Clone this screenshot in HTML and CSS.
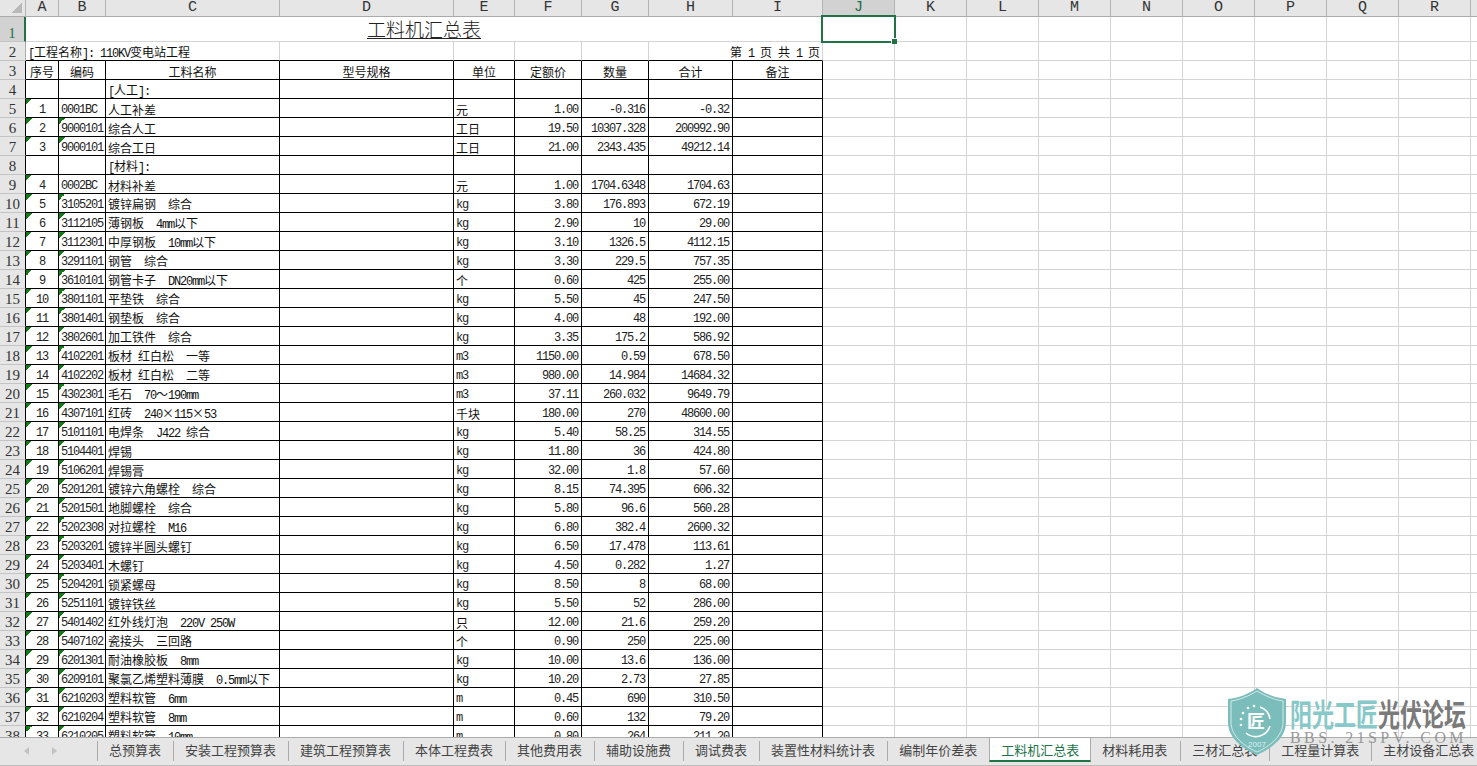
FILE: index.html
```html
<!DOCTYPE html>
<html lang="zh-CN">
<head>
<meta charset="utf-8">
<title>工料机汇总表</title>
<link rel="stylesheet" href="styles.css">
</head>
<body>
<div class="book">
<div class="sheet">
<table class="grid">
<colgroup><col class="c0"><col class="ca"><col class="cb"><col class="cc"><col class="cc"><col class="ce"><col class="cf"><col class="cf"><col class="ch"><col class="ci"><col class="cj"><col class="cj"><col class="cj"><col class="cj"><col class="cj"><col class="cj"><col class="cj"><col class="cj"><col class="cj"><col class="cj"></colgroup>
<tr class="hd"><th class="corner"></th><th>A</th><th>B</th><th>C</th><th>D</th><th>E</th><th>F</th><th>G</th><th>H</th><th>I</th><th class="sel">J</th><th>K</th><th>L</th><th>M</th><th>N</th><th>O</th><th>P</th><th>Q</th><th>R</th><th></th></tr>
<tr class="r1"><th class="rh rsel">1</th><td colspan="9" class="title"><span>工料机汇总表</span></td><td class="cur"><div class="cursor"><i class="handle"></i></div></td><td class="e" colspan="9"></td></tr>
<tr class="r2"><th class="rh">2</th><td colspan="3"><span class="l">[</span>工程名称<span class="l">]: 110KV</span>变电站工程</td><td></td><td></td><td></td><td></td><td colspan="2" class="pg">第<span class="l"> 1 </span>页<span class="l"> </span>共<span class="l"> 1 </span>页</td><td class="e" colspan="10"></td></tr>
<tr class="b"><th class="rh">3</th><td class="c">序号</td><td class="c">编码</td><td class="c">工料名称</td><td class="c">型号规格</td><td class="c">单位</td><td class="c">定额价</td><td class="c">数量</td><td class="c">合计</td><td class="c">备注</td><td class="e" colspan="10"></td></tr>
<tr class="b"><th class="rh">4</th><td></td><td></td><td><span class="l">[</span>人工<span class="l">]:</span></td><td></td><td></td><td></td><td></td><td></td><td></td><td class="e" colspan="10"></td></tr>
<tr class="b"><th class="rh">5</th><td class="s t">1</td><td class="m">0001BC</td><td>人工补差</td><td></td><td>元</td><td class="n">1.00</td><td class="n">-0.316</td><td class="n">-0.32</td><td></td><td class="e" colspan="10"></td></tr>
<tr class="b"><th class="rh">6</th><td class="s t">2</td><td class="m t">9000101</td><td>综合人工</td><td></td><td>工日</td><td class="n">19.50</td><td class="n">10307.328</td><td class="n">200992.90</td><td></td><td class="e" colspan="10"></td></tr>
<tr class="b"><th class="rh">7</th><td class="s t">3</td><td class="m t">9000101</td><td>综合工日</td><td></td><td>工日</td><td class="n">21.00</td><td class="n">2343.435</td><td class="n">49212.14</td><td></td><td class="e" colspan="10"></td></tr>
<tr class="b"><th class="rh">8</th><td></td><td></td><td><span class="l">[</span>材料<span class="l">]:</span></td><td></td><td></td><td></td><td></td><td></td><td></td><td class="e" colspan="10"></td></tr>
<tr class="b"><th class="rh">9</th><td class="s t">4</td><td class="m">0002BC</td><td>材料补差</td><td></td><td>元</td><td class="n">1.00</td><td class="n">1704.6348</td><td class="n">1704.63</td><td></td><td class="e" colspan="10"></td></tr>
<tr class="b"><th class="rh">10</th><td class="s t">5</td><td class="m t">3105201</td><td>镀锌扁钢<span class="l">  </span>综合</td><td></td><td class="m">kg</td><td class="n">3.80</td><td class="n">176.893</td><td class="n">672.19</td><td></td><td class="e" colspan="10"></td></tr>
<tr class="b"><th class="rh">11</th><td class="s t">6</td><td class="m t">3112105</td><td>薄钢板<span class="l">  4mm</span>以下</td><td></td><td class="m">kg</td><td class="n">2.90</td><td class="n">10</td><td class="n">29.00</td><td></td><td class="e" colspan="10"></td></tr>
<tr class="b"><th class="rh">12</th><td class="s t">7</td><td class="m t">3112301</td><td>中厚钢板<span class="l">  10mm</span>以下</td><td></td><td class="m">kg</td><td class="n">3.10</td><td class="n">1326.5</td><td class="n">4112.15</td><td></td><td class="e" colspan="10"></td></tr>
<tr class="b"><th class="rh">13</th><td class="s t">8</td><td class="m t">3291101</td><td>钢管<span class="l">  </span>综合</td><td></td><td class="m">kg</td><td class="n">3.30</td><td class="n">229.5</td><td class="n">757.35</td><td></td><td class="e" colspan="10"></td></tr>
<tr class="b"><th class="rh">14</th><td class="s t">9</td><td class="m t">3610101</td><td>钢管卡子<span class="l">  DN20mm</span>以下</td><td></td><td>个</td><td class="n">0.60</td><td class="n">425</td><td class="n">255.00</td><td></td><td class="e" colspan="10"></td></tr>
<tr class="b"><th class="rh">15</th><td class="s t">10</td><td class="m t">3801101</td><td>平垫铁<span class="l">  </span>综合</td><td></td><td class="m">kg</td><td class="n">5.50</td><td class="n">45</td><td class="n">247.50</td><td></td><td class="e" colspan="10"></td></tr>
<tr class="b"><th class="rh">16</th><td class="s t">11</td><td class="m t">3801401</td><td>钢垫板<span class="l">  </span>综合</td><td></td><td class="m">kg</td><td class="n">4.00</td><td class="n">48</td><td class="n">192.00</td><td></td><td class="e" colspan="10"></td></tr>
<tr class="b"><th class="rh">17</th><td class="s t">12</td><td class="m t">3802601</td><td>加工铁件<span class="l">  </span>综合</td><td></td><td class="m">kg</td><td class="n">3.35</td><td class="n">175.2</td><td class="n">586.92</td><td></td><td class="e" colspan="10"></td></tr>
<tr class="b"><th class="rh">18</th><td class="s t">13</td><td class="m t">4102201</td><td>板材<span class="l"> </span>红白松<span class="l">  </span>一等</td><td></td><td class="m">m3</td><td class="n">1150.00</td><td class="n">0.59</td><td class="n">678.50</td><td></td><td class="e" colspan="10"></td></tr>
<tr class="b"><th class="rh">19</th><td class="s t">14</td><td class="m t">4102202</td><td>板材<span class="l"> </span>红白松<span class="l">  </span>二等</td><td></td><td class="m">m3</td><td class="n">980.00</td><td class="n">14.984</td><td class="n">14684.32</td><td></td><td class="e" colspan="10"></td></tr>
<tr class="b"><th class="rh">20</th><td class="s t">15</td><td class="m t">4302301</td><td>毛石<span class="l">  70</span>～<span class="l">190mm</span></td><td></td><td class="m">m3</td><td class="n">37.11</td><td class="n">260.032</td><td class="n">9649.79</td><td></td><td class="e" colspan="10"></td></tr>
<tr class="b"><th class="rh">21</th><td class="s t">16</td><td class="m t">4307101</td><td>红砖<span class="l">  240</span>×<span class="l">115</span>×<span class="l">53</span></td><td></td><td>千块</td><td class="n">180.00</td><td class="n">270</td><td class="n">48600.00</td><td></td><td class="e" colspan="10"></td></tr>
<tr class="b"><th class="rh">22</th><td class="s t">17</td><td class="m t">5101101</td><td>电焊条<span class="l">  J422 </span>综合</td><td></td><td class="m">kg</td><td class="n">5.40</td><td class="n">58.25</td><td class="n">314.55</td><td></td><td class="e" colspan="10"></td></tr>
<tr class="b"><th class="rh">23</th><td class="s t">18</td><td class="m t">5104401</td><td>焊锡</td><td></td><td class="m">kg</td><td class="n">11.80</td><td class="n">36</td><td class="n">424.80</td><td></td><td class="e" colspan="10"></td></tr>
<tr class="b"><th class="rh">24</th><td class="s t">19</td><td class="m t">5106201</td><td>焊锡膏</td><td></td><td class="m">kg</td><td class="n">32.00</td><td class="n">1.8</td><td class="n">57.60</td><td></td><td class="e" colspan="10"></td></tr>
<tr class="b"><th class="rh">25</th><td class="s t">20</td><td class="m t">5201201</td><td>镀锌六角螺栓<span class="l">  </span>综合</td><td></td><td class="m">kg</td><td class="n">8.15</td><td class="n">74.395</td><td class="n">606.32</td><td></td><td class="e" colspan="10"></td></tr>
<tr class="b"><th class="rh">26</th><td class="s t">21</td><td class="m t">5201501</td><td>地脚螺栓<span class="l">  </span>综合</td><td></td><td class="m">kg</td><td class="n">5.80</td><td class="n">96.6</td><td class="n">560.28</td><td></td><td class="e" colspan="10"></td></tr>
<tr class="b"><th class="rh">27</th><td class="s t">22</td><td class="m t">5202308</td><td>对拉螺栓<span class="l">  M16</span></td><td></td><td class="m">kg</td><td class="n">6.80</td><td class="n">382.4</td><td class="n">2600.32</td><td></td><td class="e" colspan="10"></td></tr>
<tr class="b"><th class="rh">28</th><td class="s t">23</td><td class="m t">5203201</td><td>镀锌半圆头螺钉</td><td></td><td class="m">kg</td><td class="n">6.50</td><td class="n">17.478</td><td class="n">113.61</td><td></td><td class="e" colspan="10"></td></tr>
<tr class="b"><th class="rh">29</th><td class="s t">24</td><td class="m t">5203401</td><td>木螺钉</td><td></td><td class="m">kg</td><td class="n">4.50</td><td class="n">0.282</td><td class="n">1.27</td><td></td><td class="e" colspan="10"></td></tr>
<tr class="b"><th class="rh">30</th><td class="s t">25</td><td class="m t">5204201</td><td>锁紧螺母</td><td></td><td class="m">kg</td><td class="n">8.50</td><td class="n">8</td><td class="n">68.00</td><td></td><td class="e" colspan="10"></td></tr>
<tr class="b"><th class="rh">31</th><td class="s t">26</td><td class="m t">5251101</td><td>镀锌铁丝</td><td></td><td class="m">kg</td><td class="n">5.50</td><td class="n">52</td><td class="n">286.00</td><td></td><td class="e" colspan="10"></td></tr>
<tr class="b"><th class="rh">32</th><td class="s t">27</td><td class="m t">5401402</td><td>红外线灯泡<span class="l">  220V 250W</span></td><td></td><td>只</td><td class="n">12.00</td><td class="n">21.6</td><td class="n">259.20</td><td></td><td class="e" colspan="10"></td></tr>
<tr class="b"><th class="rh">33</th><td class="s t">28</td><td class="m t">5407102</td><td>瓷接头<span class="l">  </span>三回路</td><td></td><td>个</td><td class="n">0.90</td><td class="n">250</td><td class="n">225.00</td><td></td><td class="e" colspan="10"></td></tr>
<tr class="b"><th class="rh">34</th><td class="s t">29</td><td class="m t">6201301</td><td>耐油橡胶板<span class="l">  8mm</span></td><td></td><td class="m">kg</td><td class="n">10.00</td><td class="n">13.6</td><td class="n">136.00</td><td></td><td class="e" colspan="10"></td></tr>
<tr class="b"><th class="rh">35</th><td class="s t">30</td><td class="m t">6209101</td><td>聚氯乙烯塑料薄膜<span class="l">  0.5mm</span>以下</td><td></td><td class="m">kg</td><td class="n">10.20</td><td class="n">2.73</td><td class="n">27.85</td><td></td><td class="e" colspan="10"></td></tr>
<tr class="b"><th class="rh">36</th><td class="s t">31</td><td class="m t">6210203</td><td>塑料软管<span class="l">  6mm</span></td><td></td><td class="m">m</td><td class="n">0.45</td><td class="n">690</td><td class="n">310.50</td><td></td><td class="e" colspan="10"></td></tr>
<tr class="b"><th class="rh">37</th><td class="s t">32</td><td class="m t">6210204</td><td>塑料软管<span class="l">  8mm</span></td><td></td><td class="m">m</td><td class="n">0.60</td><td class="n">132</td><td class="n">79.20</td><td></td><td class="e" colspan="10"></td></tr>
<tr class="b"><th class="rh">38</th><td class="s t">33</td><td class="m t">6210205</td><td>塑料软管<span class="l">  10mm</span></td><td></td><td class="m">m</td><td class="n">0.80</td><td class="n">264</td><td class="n">211.20</td><td></td><td class="e" colspan="10"></td></tr>
</table>
</div>
<div class="tabs">
<div class="nav"><i class="arrow left"></i><i class="arrow right"></i></div>
<div class="tab">总预算表</div>
<div class="tab">安装工程预算表</div>
<div class="tab">建筑工程预算表</div>
<div class="tab">本体工程费表</div>
<div class="tab">其他费用表</div>
<div class="tab">辅助设施费</div>
<div class="tab">调试费表</div>
<div class="tab">装置性材料统计表</div>
<div class="tab">编制年价差表</div>
<div class="tab on">工料机汇总表</div>
<div class="tab after">材料耗用表</div>
<div class="tab">三材汇总表</div>
<div class="tab">工程量计算表</div>
<div class="tab">主材设备汇总表</div>
</div>
<div class="wm">
<svg class="shield" viewBox="0 0 60 68" width="60" height="68" aria-hidden="true">
<path d="M30 0C38 6 49 10 59 11V34C59 50 45 60 30 67C15 60 1 50 1 34V11C11 10 22 6 30 0Z" fill="#7bbdbb"/>
<path d="M30 3C38 8 48 12 56 13V34C56 48 43 58 30 64C17 58 4 48 4 34V13C12 12 22 8 30 3Z" fill="none" stroke="#d4eaea" stroke-width="1"/>
<path d="M33 19A15 15 0 0 1 43 31M43 38A15 15 0 0 1 19 45" fill="none" stroke="#fff" stroke-width="1.6"/>
<g fill="#fff"><circle cx="27" cy="18" r="1.3"/><circle cx="21" cy="20" r="1.3"/><circle cx="16" cy="25" r="1.3"/><circle cx="14" cy="31" r="1.3"/><circle cx="14" cy="37" r="1.3"/></g>
<text x="29" y="40" class="seal">匠</text>
<text x="30" y="59" class="year">2007</text>
</svg>
<div class="wm-text">
<div class="wm-name"><span class="wm-teal">阳光工匠</span><span class="wm-grey">光伏论坛</span></div>
<div class="wm-url">BBS. 21SPV. COM</div>
</div>
</div>
</div>
</body>
</html>
```
FILE: styles.css
```css
* { box-sizing: border-box; }
html, body { margin: 0; padding: 0; background: #fff; }
.book { position: relative; width: 1477px; height: 766px; overflow: hidden; display: flex; flex-direction: column; }
.sheet { flex: 1; min-height: 0; overflow: hidden; }

.grid { table-layout: fixed; border-collapse: separate; border-spacing: 0; width: 1543px; font: 400 12px/14px "Noto Sans CJK SC", "Noto Sans CJK JP", sans-serif; color: #111; }
.c0 { width: 26px; } .ca { width: 33px; } .cb { width: 47px; } .cc { width: 174px; } .ce { width: 61px; }
.cf { width: 67px; } .ch { width: 84px; } .ci { width: 90px; } .cj { width: 72px; }

.hd th { height: 17px; background: #e6e6e6; border-right: 1px solid #b4b4b4; border-bottom: 1px solid #ababab; font: 15px/16px "Liberation Mono", monospace; color: #333; padding: 0; vertical-align: bottom; overflow: hidden; }
.hd .corner { background: #e6e6e6 linear-gradient(135deg, transparent 50%, #b9b9b9 50%) no-repeat 12px 3px / 10px 10px; }
.hd .sel { background: #d2d2d2; color: #1f6b45; border-bottom-color: #217346; }

.rh { width: 26px; background: #e6e6e6; border-right: 1px solid #ababab; border-bottom: 1px solid #c4c4c4; font: 15px/15px "Liberation Serif", serif; color: #333; padding: 0; vertical-align: bottom; text-align: center; font-weight: 400; }
.rsel { background: #d2d2d2; color: #217346; border-right: 2px solid #217346; }

td { height: 19px; border-right: 1px solid #d4d4d4; border-bottom: 1px solid #d4d4d4; padding: 0 1px 0 2px; vertical-align: bottom; white-space: pre; overflow: hidden; }
.r1 td { height: 25px; }
.r1 .rh { height: 25px; }
.r2 th { height: 19px; }
.b th { height: 19px; border-right-color: #000; }
.r2 td:not(.e) { border-bottom-color: #000; }
.r2 .pg { padding-right: 2px; text-align: right; }
.b td { border-color: #000; }
.b td.e, td.e { border-right: 0; border-bottom-color: #d4d4d4; background: repeating-linear-gradient(90deg, transparent 0 71px, #d4d4d4 71px 72px); }

.title { text-align: center; padding: 0 0 1px; font-size: 19px; font-weight: 300; line-height: 22px; color: #222; overflow: visible; }
.title span { text-decoration: underline; }

.l, .n, .m, .s { font-family: "Liberation Mono", monospace; font-size: 12px; font-weight: 400; letter-spacing: -1.2px; line-height: 14px; }
.n, .m, .s { color: #222; }
.l { line-height: 1; }
.c { text-align: center; padding-left: 0; padding-right: 0; }
.n { text-align: right; padding-right: 3px; }
.s { text-align: center; padding-left: 0; padding-right: 0; }
.t { background: linear-gradient(135deg, #0f7d12 50%, transparent 50%) no-repeat 0 0 / 6px 6px; }

.cur { overflow: visible; position: relative; }
.cursor { position: absolute; left: -2px; top: -2px; width: 75px; height: 28px; border: 2px solid #217346; }
.handle { position: absolute; right: -3px; bottom: -3px; background: #217346; border: 1px solid #fff; border-width: 1px 0 0 1px; box-sizing: content-box; width: 5px; height: 5px; }

.tabs { flex: none; height: 29px; display: flex; background: #e6e6e6; border-top: 1px solid #ababab; border-bottom: 1px solid #bdbdbd; font: 13px/18px "Noto Sans CJK SC", "Noto Sans CJK JP", sans-serif; color: #444; white-space: nowrap; overflow: hidden; }
.nav { width: 97px; flex: none; display: flex; gap: 23px; padding: 9px 0 0 24px; }
.arrow { width: 0; height: 0; border: 4px solid transparent; border-left-width: 0; border-right-width: 0; }
.arrow.left { border-right: 5px solid #c2c2c2; }
.arrow.right { border-left: 5px solid #c2c2c2; }
.tab { flex: none; height: 20px; margin-top: 3px; padding: 0 12px 0 11px; border-left: 1px solid #ababab; }
.tab.on { height: 25px; margin-top: -1px; padding: 1px 0 0 11px; line-height: 24px; background: #fff; color: #217346; border-left: 1px solid #ababab; border-right: 1px solid #ababab; border-bottom: 2px solid #217346; width: 102px; }
.tab.after { border-left: 0; padding-left: 11px; padding-right: 13px; }

.wm { position: absolute; left: 1227px; top: 688px; width: 245px; height: 70px; display: flex; pointer-events: none; }
.shield { flex: none; }
.seal { font: 700 18px "Noto Sans CJK SC", sans-serif; fill: #fff; text-anchor: middle; }
.year { font: 8px "Liberation Sans", sans-serif; fill: #dcefef; text-anchor: middle; }
.wm-text { margin-left: 3px; }
.wm-name { display: flex; font: 700 22px/22px "Noto Sans CJK SC", sans-serif; transform: scaleY(1.4); transform-origin: 0 0; margin-top: 9px; white-space: nowrap; }
.wm-teal { color: #86c9c8; }
.wm-grey { color: #7a7a7a; }
.wm-url { margin-top: 13px; font: 16px/12px "Liberation Serif", serif; color: #8a8a8a; letter-spacing: 3.4px; white-space: pre; opacity: .85; }
```
